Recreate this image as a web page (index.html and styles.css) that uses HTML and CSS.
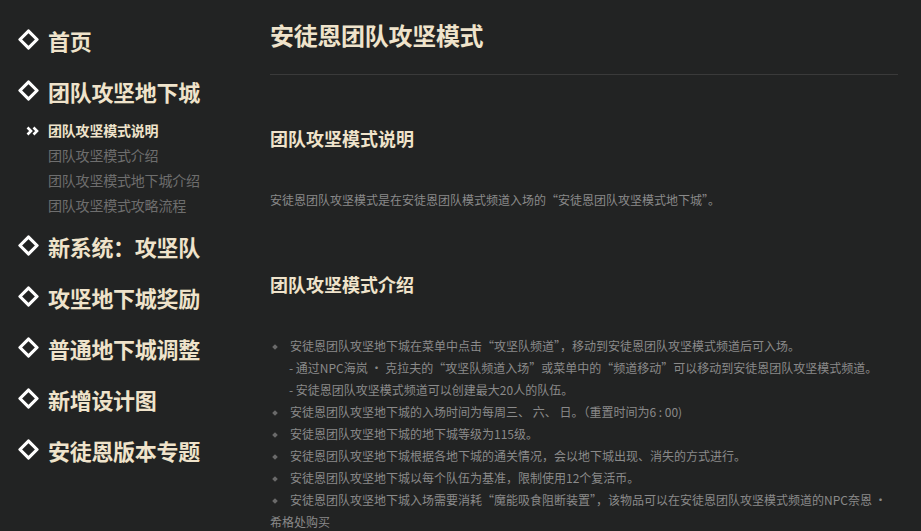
FILE: index.html
```html
<!DOCTYPE html>
<html lang="zh">
<head>
<meta charset="utf-8">
<title>安徒恩团队攻坚模式</title>
<link rel="stylesheet" href="styles.css">
</head>
<body>
<div class="page">
  <nav class="sidebar">
    <ul class="nav">
      <li class="nav-item"><span class="diamond"></span><span class="nav-text">首页</span></li>
      <li class="nav-item"><span class="diamond"></span><span class="nav-text">团队攻坚地下城</span></li>
      <li class="sub">
        <ul class="subnav">
          <li class="sub-item active"><svg class="chev" width="13" height="10" viewBox="0 0 13 10"><path d="M1.5 1.5 L5 5 L1.5 8.5 M7.5 1.5 L11 5 L7.5 8.5" fill="none" stroke="#ffffff" stroke-width="2.6"/></svg>团队攻坚模式说明</li>
          <li class="sub-item">团队攻坚模式介绍</li>
          <li class="sub-item">团队攻坚模式地下城介绍</li>
          <li class="sub-item">团队攻坚模式攻略流程</li>
        </ul>
      </li>
      <li class="nav-item gap"><span class="diamond"></span><span class="nav-text">新系统：攻坚队</span></li>
      <li class="nav-item"><span class="diamond"></span><span class="nav-text">攻坚地下城奖励</span></li>
      <li class="nav-item"><span class="diamond"></span><span class="nav-text">普通地下城调整</span></li>
      <li class="nav-item"><span class="diamond"></span><span class="nav-text">新增设计图</span></li>
      <li class="nav-item"><span class="diamond"></span><span class="nav-text">安徒恩版本专题</span></li>
    </ul>
  </nav>
  <main class="content">
    <h1 class="title">安徒恩团队攻坚模式</h1>
    <h2 class="section-title first">团队攻坚模式说明</h2>
    <p class="para">安徒恩团队攻坚模式是在安徒恩团队模式频道入场的“安徒恩团队攻坚模式地下城”。</p>
    <h2 class="section-title">团队攻坚模式介绍</h2>
    <div class="list">
      <p class="li"><span class="bullet"></span>安徒恩团队攻坚地下城在菜单中点击“攻坚队频道”，移动到安徒恩团队攻坚模式频道后可入场。</p>
      <p class="li sub-li">- 通过NPC海岚 · 克拉夫的“攻坚队频道入场”或菜单中的“频道移动”可以移动到安徒恩团队攻坚模式频道。</p>
      <p class="li sub-li">- 安徒恩团队攻坚模式频道可以创建最大20人的队伍。</p>
      <p class="li"><span class="bullet"></span>安徒恩团队攻坚地下城的入场时间为每周三、 六、 日。（重置时间为6 : 00)</p>
      <p class="li"><span class="bullet"></span>安徒恩团队攻坚地下城的地下城等级为115级。</p>
      <p class="li"><span class="bullet"></span>安徒恩团队攻坚地下城根据各地下城的通关情况，会以地下城出现、消失的方式进行。</p>
      <p class="li"><span class="bullet"></span>安徒恩团队攻坚地下城以每个队伍为基准，限制使用12个复活币。</p>
      <p class="li"><span class="bullet"></span>安徒恩团队攻坚地下城入场需要消耗“魔能吸食阻断装置”，该物品可以在安徒恩团队攻坚模式频道的NPC奈恩 · 希格处购买</p>
    </div>
  </main>
</div>
</body>
</html>
```

FILE: styles.css
```css
* { box-sizing: border-box; }
html, body {
  margin: 0;
  padding: 0;
  background: #222323;
  height: 100%;
  overflow: hidden;
}
body {
  font-family: "Noto Sans CJK SC", "Noto Sans", sans-serif;
  color: #8a8a8a;
}
.page {
  display: flex;
  align-items: flex-start;
}
.sidebar {
  width: 270px;
  flex: none;
  padding: 14px 0 0 20px;
}
.nav, .subnav {
  list-style: none;
  margin: 0;
  padding: 0;
}
.subnav { margin-top: 2px; }
.nav-item {
  display: flex;
  align-items: center;
  height: 51px;
}
.nav-item.gap { margin-top: 2px; }
.diamond {
  width: 17px;
  height: 17px;
  display: flex;
  align-items: center;
  justify-content: center;
  margin-right: 11px;
  flex: none;
}
.diamond::before {
  content: "";
  width: 9px;
  height: 9px;
  border: 3.5px solid #ffffff;
  transform: rotate(45deg);
  border-radius: 1px;
}
.nav-text {
  font-size: 22px;
  font-weight: 700;
  color: #efe3cb;
  line-height: 1;
  letter-spacing: -0.3px;
}
.sub-item {
  position: relative;
  height: 25px;
  line-height: 25px;
  font-size: 14px;
  color: #6e6e6e;
  padding-left: 28px;
  letter-spacing: -0.2px;
}
.sub-item.active {
  color: #efe3cb;
  font-weight: 700;
}
.chev {
  position: absolute;
  left: 6px;
  top: 8px;
}
.content {
  width: 628px;
  flex: none;
  padding-top: 17px;
}
.title {
  margin: 0;
  font-size: 24px;
  line-height: 36px;
  font-weight: 700;
  color: #efe3cb;
  padding-bottom: 21px;
  border-bottom: 1px solid #3a3a3a;
  letter-spacing: -0.3px;
}
.section-title {
  margin: 59px 0 0;
  font-size: 18px;
  line-height: 28px;
  font-weight: 700;
  color: #efe3cb;
}
.section-title.first { margin-top: 49px; }
.para {
  margin: 37px 0 0;
  font-size: 12px;
  line-height: 22px;
  color: #8a8a8a;
}
.list { margin-top: 37px; }
.li {
  margin: 0;
  font-size: 12px;
  line-height: 22px;
  color: #8a8a8a;
}
.sub-li { padding-left: 19px; }
.bullet {
  display: inline-block;
  width: 20px;
  height: 10px;
  position: relative;
  vertical-align: middle;
}
.bullet::before {
  content: "";
  position: absolute;
  left: 3px;
  top: 2px;
  width: 4px;
  height: 4px;
  background: #6a6a6a;
  transform: rotate(45deg);
}
```
